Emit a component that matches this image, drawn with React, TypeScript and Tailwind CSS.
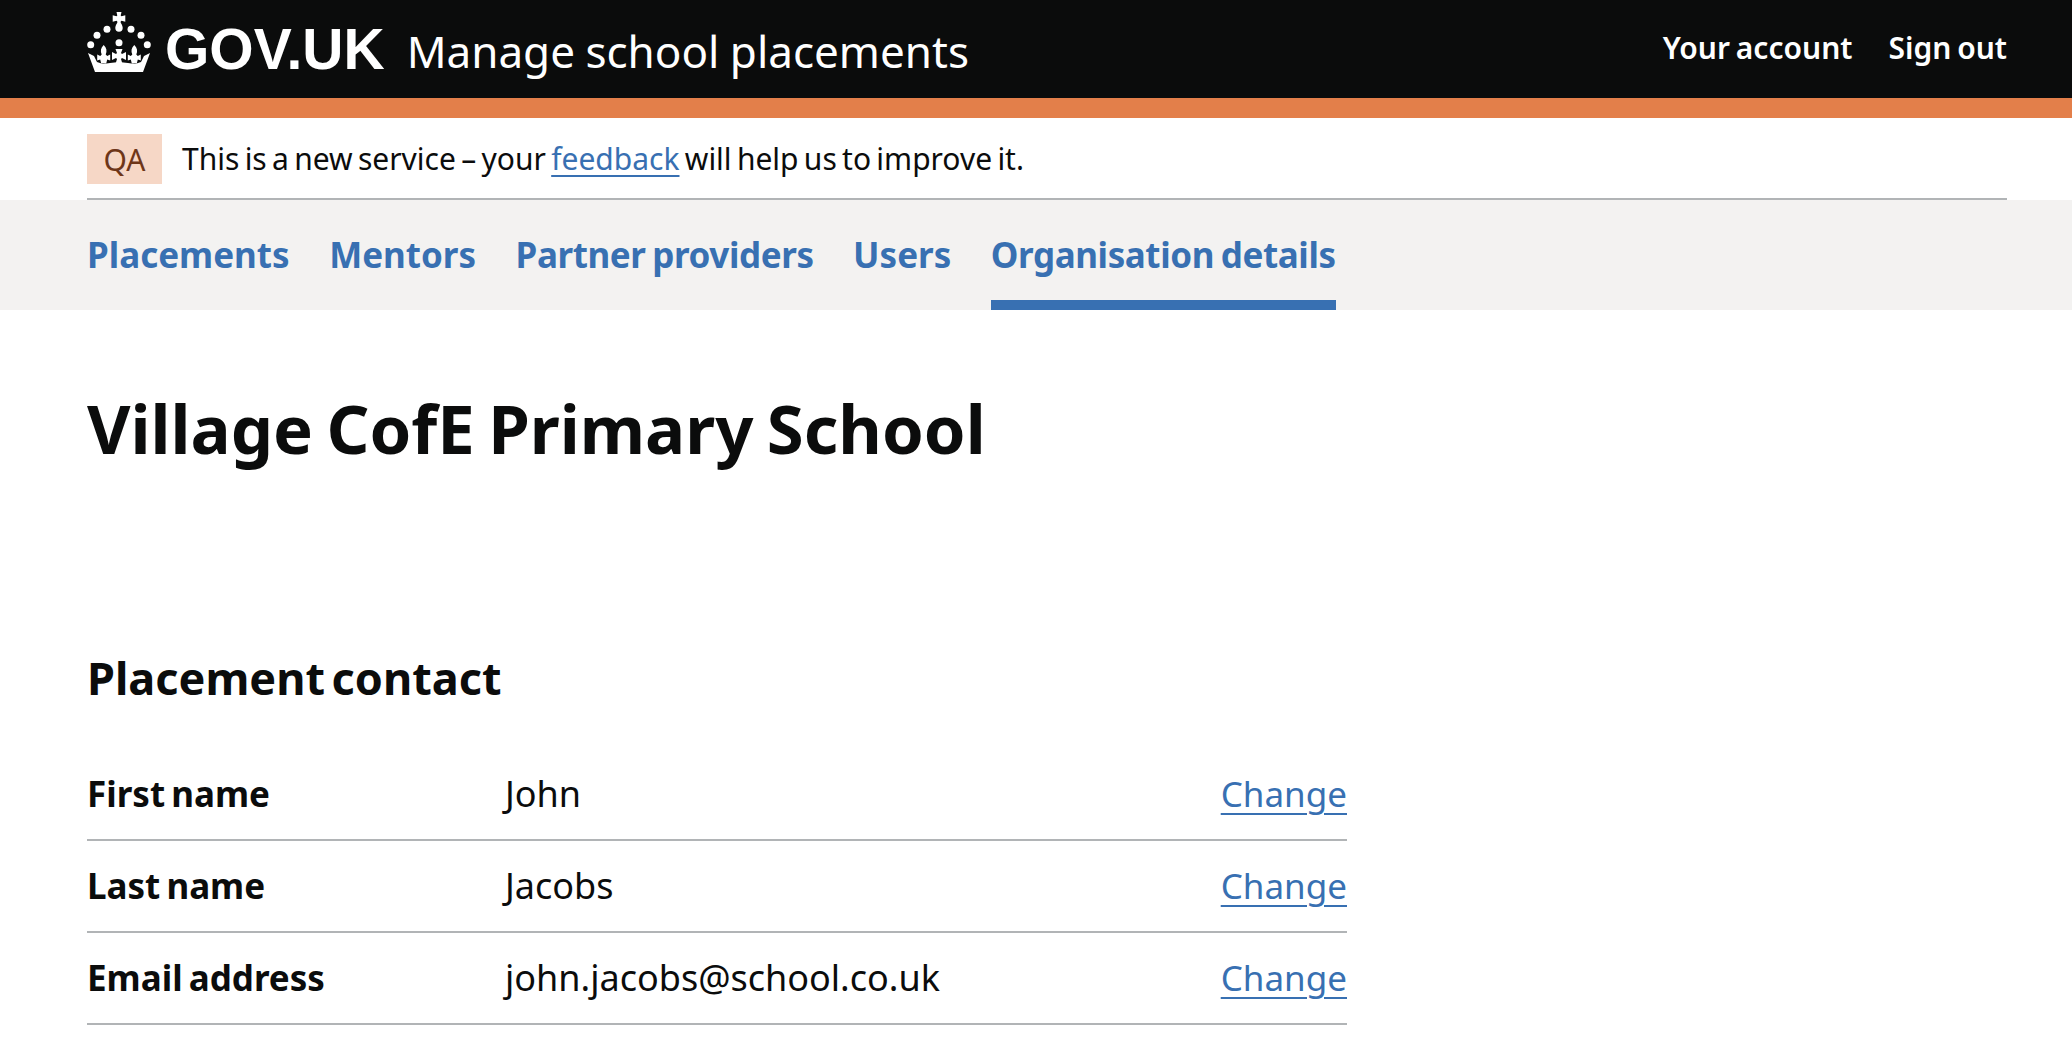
const rows = [
  { label: "First name", value: "John" },
  { label: "Last name", value: "Jacobs" },
  { label: "Email address", value: "john.jacobs@school.co.uk" },
];

const navItems = ["Placements", "Mentors", "Partner providers", "Users", "Organisation details"];

function Crown() {
  return (
    <svg viewBox="0 0 64 60" className="w-16 h-[60px] mb-[14px] fill-white shrink-0">
      <path d="M29.5 0h5l-.8 3.5.8.8 3.8-1v6.400l-3.800-1-.8.8v1.200c1.500 2 2 4 2 5.300a3.700 3.700 0 0 1-7.400 0c0-1.300.5-3.300 2-5.300V9.500l-.8-.8-3.800 1V3.300l3.800 1 .8-.8z" />
      <circle cx="20" cy="17.3" r="3.5" />
      <circle cx="44" cy="17.3" r="3.5" />
      <circle cx="10" cy="23.3" r="3.5" />
      <circle cx="54" cy="23.3" r="3.5" />
      <circle cx="32" cy="30.7" r="3.5" />
      <circle cx="3.7" cy="32.7" r="3.5" />
      <circle cx="60.3" cy="32.7" r="3.5" />
      {/* cross */}
      <path d="M28.5 37h7l-1.500 4 1 1 4-2v8l-4-2-1 1 1.500 5h-7l1.500-5-1-1-4 2v-8l4 2 1-1z" />
      {/* fleurs */}
      <path d="M16.700 33c3 3 3.500 6 2 9.500l1.500 1.500 3-1.500v6l-3-1-1 4h-5l-1-4-3 1v-6l3 1.500 1.500-1.500c-1.500-3.500-1-6.500 2-9.500z" />
      <path d="M47.300 33c3 3 3.500 6 2 9.500l1.500 1.500 3-1.500v6l-3-1-1 4h-5l-1-4-3 1v-6l3 1.500 1.500-1.500c-1.500-3.500-1-6.500 2-9.500z" />
      {/* band */}
      <path d="M1 41l6 3 3 6 6 2 7-1 9-1 9 1 7 1 6-2 3-6 6-3-7 19H8z" />
    </svg>
  );
}

export default function App() {
  return (
    <div className="min-h-screen bg-white text-[#0b0c0c] font-['Noto_Sans',sans-serif]">
      {/* HEADER */}
      <header className="h-[118px] bg-[#0b0c0c] border-b-[20px] border-[#e37f4a]">
        <div className="h-full ml-[87px] mr-[65px] flex items-center justify-between text-white">
          <div className="flex items-center">
            <Crown />
            <span className="ml-[14px] text-[57px] leading-none font-bold font-['Liberation_Sans',sans-serif]">GOV.UK</span>
            <span className="ml-[22px] mt-1 text-[44px] leading-none [word-spacing:-1px]">Manage school placements</span>
          </div>
          <div className="flex items-center gap-9 mb-[3px] text-[30px] font-semibold [word-spacing:-2px]">
            <span>Your account</span>
            <span>Sign out</span>
          </div>
        </div>
      </header>

      {/* PHASE BANNER */}
      <div className="ml-[87px] mr-[65px] h-[82px] border-b-2 border-[#b1b4b6] flex items-start pt-4">
        <span className="w-[75px] h-[50px] bg-[#f6d7c6] text-[#6e3619] text-[30px] flex items-center justify-center">QA</span>
        <p className="ml-5 text-[30px] leading-[50px] [word-spacing:-2.5px]">
          This is a new service – your{" "}
          <a className="text-[#3870b2] underline underline-offset-[5px] decoration-2">feedback</a> will help us to improve it.
        </p>
      </div>

      {/* NAV */}
      <nav className="h-[110px] bg-[#f3f2f1] pl-[87px] flex gap-[39.5px] text-[35px] font-bold text-[#3870b2]">
        {navItems.map((item) => (
          <a
            key={item}
            className={
              (item === "Organisation details"
                ? "flex items-center pt-[10px] border-b-[10px] border-[#3870b2]"
                : "flex items-center pt-[10px] pb-[10px]") +
              (item.includes(" ") ? " tracking-[-0.4px] [word-spacing:-2px]" : "")
            }
          >
            {item}
          </a>
        ))}
      </nav>

      {/* MAIN */}
      <main className="ml-[87px] w-[1260px] pt-[76px]">
        <h1 className="text-[67px] leading-[84px] font-bold [word-spacing:-4px]">Village CofE Primary School</h1>
        <h2 className="mt-[180px] text-[45px] leading-[56px] font-bold [word-spacing:-5px]">Placement contact</h2>
        <dl className="mt-[43px]">
          {rows.map((row) => (
            <div key={row.label} className="h-[92px] flex items-center border-b-2 border-[#b1b4b6]">
              <dt className="w-[418px] text-[35px] font-bold [word-spacing:-3px]">{row.label}</dt>
              <dd className="flex-1 text-[36px]">{row.value}</dd>
              <a className="text-[35px] text-[#3870b2] underline underline-offset-[6px] decoration-2">Change</a>
            </div>
          ))}
        </dl>
      </main>
    </div>
  );
}
